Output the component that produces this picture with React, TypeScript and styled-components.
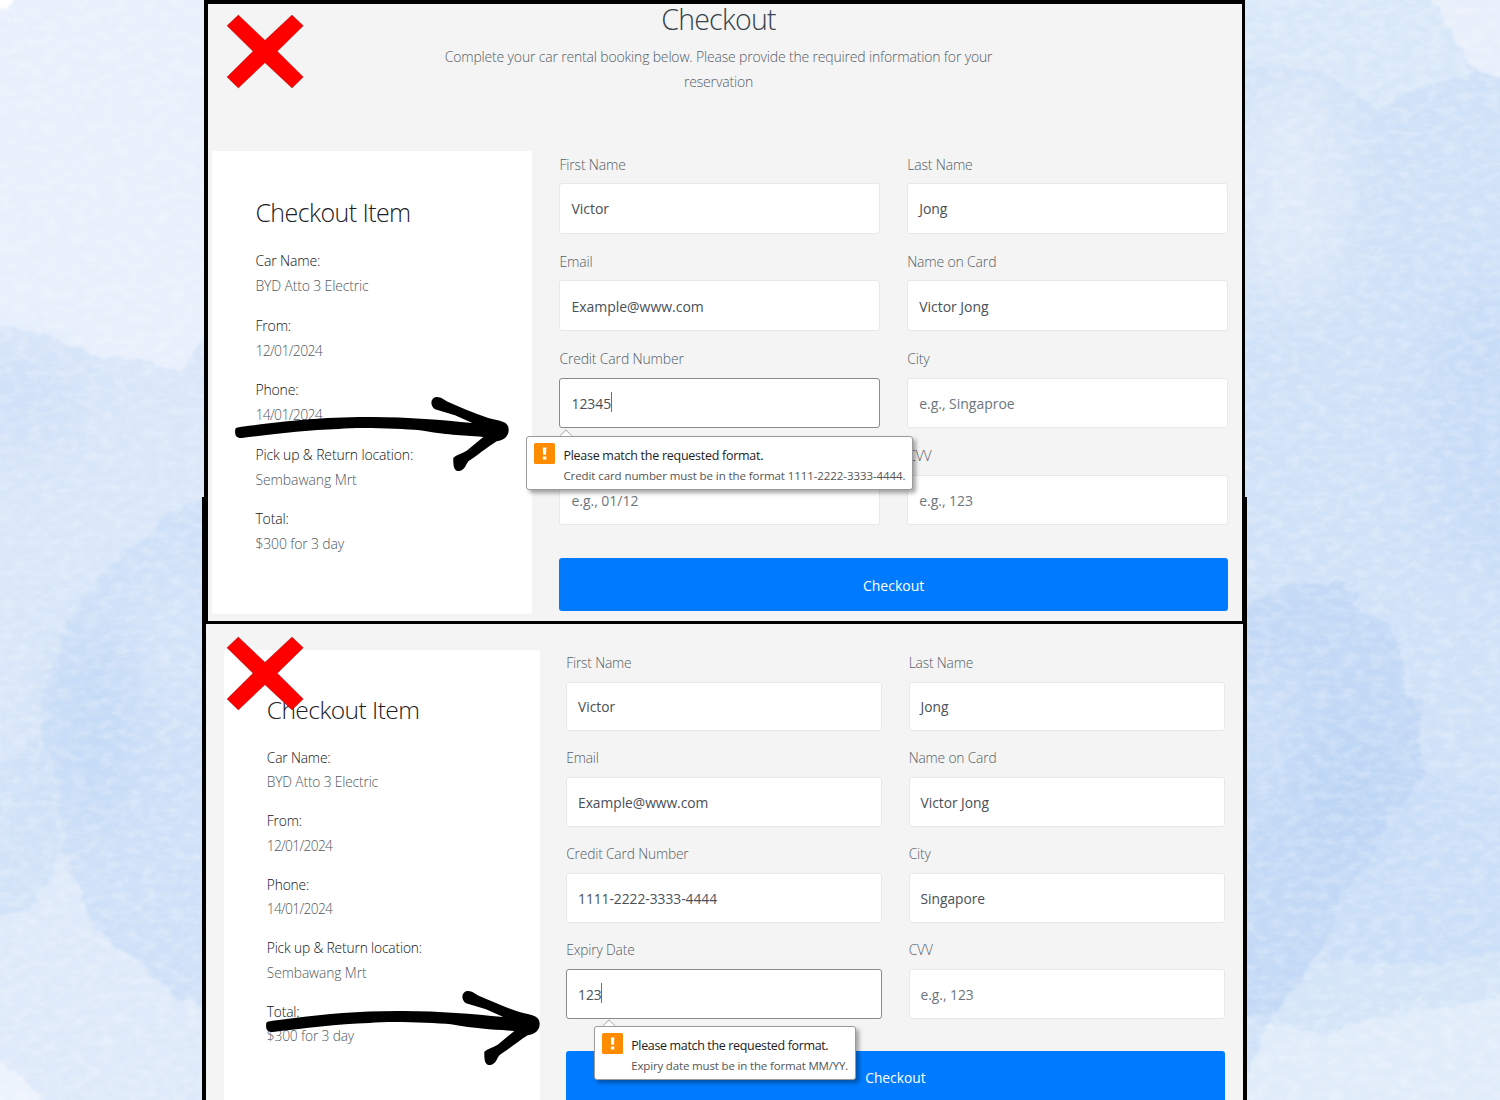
import React from "react";
import styled, { createGlobalStyle } from "styled-components";

const GlobalStyle = createGlobalStyle`
  *, *::before, *::after { box-sizing: border-box; }
  body {
    margin: 0;
    overflow: hidden;
    font-family: "Open Sans", "Noto Sans", sans-serif;
  }
  h1, h2, p, dl, dt, dd { margin: 0; font-weight: 300; }
`;

/* All measures inside a slide scale with --k. */
const u = (px: number) => `calc(var(--k) * ${px}px)`;

const Stage = styled.main`
  position: relative;
  isolation: isolate;
  width: 1500px;
  height: 1100px;
  overflow: hidden;
  background: #d8e7fa;
`;

const Backdrop = styled.svg`
  position: absolute;
  inset: 0;
  z-index: -1;
`;

const FirstSlide = styled.section`
  --k: 1;
  position: relative;
  z-index: 1;
  width: 1041px;
  height: 624px;
  margin-left: 204px;
  padding: 0 11px 0 4px;
  background: #f4f4f4;
  border: 4px solid #000;
  border-bottom-width: 3px;
  border-right-width: 3px;
`;

const SecondSlide = styled.section`
  --k: 0.985;
  position: relative;
  width: 1045px;
  height: 603px;
  margin: -127px 0 0 202px;
  padding: 153px 14px 0 18px;
  background: #f4f4f4;
  border: solid #000;
  border-width: 0 4px;
`;

const Header = styled.header`
  display: flow-root;
  height: 147px;
  padding: 0 6px 0 0;
  text-align: center;
`;

const PageTitle = styled.h1`
  margin-top: -2px;
  height: 34px;
  line-height: 34px;
  font-size: 28.5px;
  letter-spacing: -0.75px;
  color: #36424d;
`;

const Lead = styled.p`
  width: 580px;
  margin: 8px auto 0;
  font-size: 14px;
  line-height: 25px;
  letter-spacing: -0.175px;
  color: #545d66;
`;

const Columns = styled.div`
  display: flex;
  align-items: flex-start;
  gap: ${u(27)};
`;

const Summary = styled.aside`
  flex: none;
  width: ${u(320.4)};
  height: ${u(463)};
  padding: ${u(43.5)} ${u(43)} 0 ${u(43.4)};
  background: #fff;
`;

const SummaryTitle = styled.h2`
  margin-bottom: ${u(19.5)};
  line-height: ${u(34)};
  font-size: ${u(25)};
  letter-spacing: -0.58px;
  color: #1c2126;
`;

const Details = styled.dl`
  display: flex;
  flex-direction: column;
  gap: ${u(14.5)};
  font-size: ${u(14)};
  line-height: ${u(25)};
  letter-spacing: -0.15px;
  white-space: nowrap;
`;

const Term = styled.dt`
  color: #101316;
`;

const Value = styled.dd<{ $tracking?: number }>`
  color: #4f5861;
  letter-spacing: ${(p) => p.$tracking ?? -0.16}px;
`;

const Form = styled.form`
  flex: none;
  width: ${u(668.5)};
  display: grid;
  grid-template-columns: 1fr 1fr;
  gap: ${u(14.75)} ${u(27)};
`;

const Field = styled.div`
  position: relative;
`;

const Label = styled.label`
  display: block;
  height: ${u(32)};
  padding-top: 0.7px;
  font-size: ${u(14)};
  font-weight: 300;
  line-height: ${u(25)};
  letter-spacing: -0.17px;
  color: #545d66;
`;

const Control = styled.div<{ $focused?: boolean; $placeholder?: boolean }>`
  display: flex;
  align-items: center;
  height: ${u(50.5)};
  padding: ${u(1)} ${u(11)} 0;
  background: #fff;
  border: 1px solid ${(p) => (p.$focused ? "#8a8a8a" : "#e8e8e8")};
  border-radius: 3px;
  font-size: ${u(14)};
  letter-spacing: -0.02px;
  color: ${(p) => (p.$placeholder ? "#6c757d" : "#495057")};
`;

const Caret = styled.span`
  width: 1px;
  height: 20px;
  margin: 0 0 2px -0.5px;
  background: #6b7076;
`;

const Submit = styled.button`
  grid-column: 1 / -1;
  height: ${u(52.5)};
  margin-top: ${u(18.25)};
  padding: 2px 0 0;
  background: #007bff;
  border: 0;
  border-radius: 3px;
  font: 400 ${u(14)} "Open Sans", sans-serif;
  color: #fff;
`;

const Bubble = styled.div<{ $left: number; $pointer: number; $drop: number }>`
  position: absolute;
  z-index: 2;
  top: calc(100% + ${(p) => p.$drop}px);
  left: ${(p) => p.$left}px;
  display: flex;
  gap: 8px;
  height: 54px;
  padding: 6px 7px 0;
  background: #fff;
  border: 1px solid #9b9b9b;
  border-radius: 3px;
  box-shadow: 3px 3px 4px rgba(0, 0, 0, 0.35);
  white-space: nowrap;

  &::before {
    content: "";
    position: absolute;
    top: -6px;
    left: ${(p) => p.$pointer}px;
    width: 10px;
    height: 10px;
    background: #fff;
    border: solid #a8a8a8;
    border-width: 1px 0 0 1px;
    transform: rotate(45deg);
    clip-path: polygon(0 0, 100% 0, 0 100%);
  }
`;

const WarningIcon = styled.svg`
  flex: none;
  width: 21px;
  height: 21px;
`;

const BubbleTitle = styled.div<{ $tracking: number }>`
  height: 22px;
  font-size: 12.5px;
  line-height: 25px;
  letter-spacing: ${(p) => p.$tracking}px;
  color: #1d1d1d;
`;

const BubbleText = styled.div<{ $tracking: number }>`
  font-size: 11.5px;
  line-height: 21px;
  letter-spacing: ${(p) => p.$tracking}px;
  color: #555;
`;

const Cross = styled.svg`
  position: absolute;
  z-index: 3;
  width: 80px;
  height: 80px;
`;

const FirstCross = styled(Cross)`
  top: 10px;
  left: 18px;
`;

const SecondCross = styled(Cross)`
  top: 139px;
  left: 20px;
`;

const Arrow = styled.svg<{ $top: number; $left: number }>`
  position: absolute;
  top: ${(p) => p.$top}px;
  left: ${(p) => p.$left}px;
  z-index: 3;
  width: 276px;
  height: 76px;
`;

const CrossShape = () => (
  <path
    d="M115 45L195 121L276 45L310 77L232 154L310 231L276 264L195 188L115 264L81 231L159 154L81 77Z"
    fill="#fe0000"
    stroke="#5a1010"
    strokeWidth="1"
  />
);

const ArrowShape = () => (
  <path d="M106 383Q108 379 125 377C250 362 350 348 500 348C620 347 720 357 817 366L765 343L705 325C690 315 690 292 708 288C725 287 730 296 745 303C790 322 840 345 880 355C910 362 925 365 926 385C927 405 912 418 890 421C860 440 830 465 806 480C796 492 795 507 778 510C763 511 759 498 760 470C770 461 785 458 800 449L850 408C780 403 740 402 660 388C600 383 480 378 415 384C320 387 220 400 125 411C108 412 103 402 106 383Z" />
);

type Entry = { label?: string; value: string; placeholder?: boolean; focused?: boolean };

const orderDetails: [string, string, number?][] = [
  ["Car Name:", "BYD Atto 3 Electric"],
  ["From:", "12/01/2024", -0.68],
  ["Phone:", "14/01/2024", -0.68],
  ["Pick up & Return location:", "Sembawang Mrt", -0.08],
  ["Total:", "$300 for 3 day"],
];

const firstEntries: Entry[] = [
  { label: "First Name", value: "Victor" },
  { label: "Last Name", value: "Jong" },
  { label: "Email", value: "Example@www.com" },
  { label: "Name on Card", value: "Victor Jong" },
  { label: "Credit Card Number", value: "12345", focused: true },
  { label: "City", value: "e.g., Singaproe", placeholder: true },
  { value: "e.g., 01/12", placeholder: true },
  { label: "CVV", value: "e.g., 123", placeholder: true },
];

const secondEntries: Entry[] = [
  { label: "First Name", value: "Victor" },
  { label: "Last Name", value: "Jong" },
  { label: "Email", value: "Example@www.com" },
  { label: "Name on Card", value: "Victor Jong" },
  { label: "Credit Card Number", value: "1111-2222-3333-4444" },
  { label: "City", value: "Singapore" },
  { label: "Expiry Date", value: "123", focused: true },
  { label: "CVV", value: "e.g., 123", placeholder: true },
];

const OrderSummary = () => (
  <Summary>
    <SummaryTitle>Checkout Item</SummaryTitle>
    <Details>
      {orderDetails.map(([term, value, tracking]) => (
        <div key={term}>
          <Term>{term}</Term>
          <Value $tracking={tracking}>{value}</Value>
        </div>
      ))}
    </Details>
  </Summary>
);

type Hint = {
  text: string;
  left: number;
  drop: number;
  pointer: number;
  titleTracking: number;
  textTracking: number;
};

const ValidationBubble = ({ hint }: { hint: Hint }) => (
  <Bubble $left={hint.left} $pointer={hint.pointer} $drop={hint.drop}>
    <WarningIcon viewBox="0 0 21 21">
      <rect width="21" height="21" rx="1.5" fill="#ff8c00" />
      <path d="M8.8 4.6h3.6l-.4 7.2H9.2zM8.9 13.4h3.4v3.2H8.9z" fill="#fff" />
    </WarningIcon>
    <div>
      <BubbleTitle $tracking={hint.titleTracking}>Please match the requested format.</BubbleTitle>
      <BubbleText $tracking={hint.textTracking}>{hint.text}</BubbleText>
    </div>
  </Bubble>
);

const CheckoutForm = ({ entries, hint }: { entries: Entry[]; hint: Hint }) => (
  <Form>
    {entries.map((entry, index) => (
      <Field key={index}>
        <Label>{entry.label}</Label>
        <Control $focused={entry.focused} $placeholder={entry.placeholder}>
          {entry.value}
          {entry.focused && <Caret />}
        </Control>
        {entry.focused && <ValidationBubble hint={hint} />}
      </Field>
    ))}
    <Submit type="button">Checkout</Submit>
  </Form>
);

const Watercolor = () => (
  <Backdrop width="1500" height="1100" viewBox="0 0 1500 1100">
    <defs>
      <filter id="edge" x="-5%" y="-5%" width="110%" height="110%">
        <feTurbulence type="fractalNoise" baseFrequency="0.05 0.07" numOctaves="4" seed="4" />
        <feDisplacementMap in="SourceGraphic" scale="14" xChannelSelector="R" yChannelSelector="G" />
        <feGaussianBlur stdDeviation="0.8" />
      </filter>
      <filter id="wash" x="-50%" y="-50%" width="200%" height="200%">
        <feGaussianBlur stdDeviation="26" />
      </filter>
      <filter id="paper" x="0" y="0" width="100%" height="100%">
        <feTurbulence type="fractalNoise" baseFrequency="0.07 0.13" numOctaves="4" seed="9" />
        <feColorMatrix values="0 0 0 0 1  0 0 0 0 1  0 0 0 0 1  1 0 0 0 -0.35" />
      </filter>
    </defs>
    <g filter="url(#edge)">
      <rect x="-20" y="-20" width="260" height="1140" fill="#d9e7f9" />
      <path d="M-20 -20H240V325L204 332L190 362L180 371L133 359L100 357L73 345L33 331L-20 322Z" fill="#e8f0fc" />
      <path d="M-20 -20H30L8 8L-20 14Z" fill="#fff" />
      <path d="M-20 775L40 742L60 850L35 905L-20 925Z" fill="#d2e3f8" />
      <path d="M-20 925L35 905L60 862L130 950L240 1020V1120H-20Z" fill="#deeafa" />
      <path d="M-20 1048L15 1070L45 1105L-20 1120Z" fill="#ecf3fd" />
      <path d="M240 480L204 497L160 520L150 535L110 565L90 585L63 630L60 655L45 680L40 735L55 770L60 810L65 850L85 905L95 930L130 955L180 1000L240 1018Z" fill="#cfe1f8" />
    </g>
    <g filter="url(#edge)">
      <rect x="1230" y="-20" width="300" height="1140" fill="#d0e2f8" />
      <path d="M1410 -20L1440 10L1455 40L1475 70L1530 84V-20Z" fill="#e8effb" />
      <path d="M1230 -20H1410L1440 10L1455 40L1475 75L1440 84L1410 90L1380 110L1320 70L1230 60Z" fill="#d9e8f9" />
      <path d="M1230 612L1290 585L1345 583L1365 610L1390 625L1400 650L1405 690L1420 700L1420 760L1428 775L1395 810L1370 860L1340 895L1330 940L1300 980L1280 1010L1230 1020Z" fill="#c3d9f6" />
      <path d="M1428 775L1530 800V950L1440 965L1330 960L1330 940L1340 895L1370 860L1395 810Z" fill="#cbdff8" />
      <path d="M1530 945L1440 965L1325 960L1300 985L1270 1020L1300 1030L1325 1038L1360 1020L1530 1000Z" fill="#d4e5f8" />
      <path d="M1230 1120L1268 1022L1300 1030L1325 1038L1360 1021L1530 992V1120Z" fill="#e0ecfa" />
    </g>
    <g filter="url(#wash)">
      <ellipse cx="20" cy="400" rx="60" ry="45" fill="#c5d9f7" opacity="0.5" />
      <ellipse cx="95" cy="730" rx="40" ry="100" fill="#bad3f5" opacity="0.5" />
      <ellipse cx="175" cy="640" rx="35" ry="70" fill="#dbe9fb" opacity="0.5" />
      <ellipse cx="1290" cy="190" rx="60" ry="120" fill="#e2edf9" opacity="0.7" />
      <ellipse cx="1490" cy="430" rx="70" ry="150" fill="#bfd7f7" opacity="0.5" />
      <ellipse cx="1345" cy="790" rx="45" ry="70" fill="#b4d0f4" opacity="0.45" />
      <ellipse cx="1260" cy="730" rx="26" ry="70" fill="#d6e6fa" opacity="0.6" />
    </g>
    <rect width="1500" height="1100" filter="url(#paper)" opacity="0.55" />
  </Backdrop>
);

export default function App() {
  return (
    <Stage>
      <GlobalStyle />
      <Watercolor />
      <FirstSlide>
        <Header>
          <PageTitle>Checkout</PageTitle>
          <Lead>
            Complete your car rental booking below. Please provide the required information for your
            reservation
          </Lead>
        </Header>
        <Columns>
          <OrderSummary />
          <CheckoutForm
            entries={firstEntries}
            hint={{
              text: "Credit card number must be in the format 1111-2222-3333-4444.",
              left: -33,
              drop: 8,
              pointer: 34,
              titleTracking: -0.27,
              textTracking: -0.085,
            }}
          />
        </Columns>
        <FirstCross viewBox="78 42 240 240">
          <CrossShape />
        </FirstCross>
        <Arrow $top={391.5} $left={26} viewBox="102 285 828 228">
          <ArrowShape />
        </Arrow>
      </FirstSlide>
      <SecondSlide>
        <Columns>
          <OrderSummary />
          <CheckoutForm
            entries={secondEntries}
            hint={{
              text: "Expiry date must be in the format MM/YY.",
              left: 28,
              drop: 7,
              pointer: 9,
              titleTracking: -0.35,
              textTracking: -0.16,
            }}
          />
        </Columns>
        <SecondCross viewBox="78 42 240 240">
          <CrossShape />
        </SecondCross>
        <Arrow $top={492.5} $left={58.7} viewBox="102 285 828 228">
          <ArrowShape />
        </Arrow>
      </SecondSlide>
    </Stage>
  );
}
